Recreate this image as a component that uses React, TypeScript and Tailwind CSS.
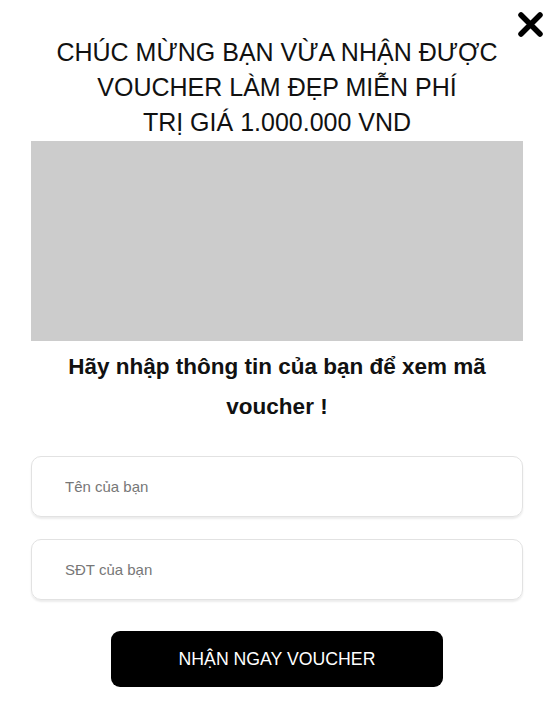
export default function App() {
  return (
    <div className="relative min-h-[705px] w-[554px] bg-white font-['Liberation_Sans',Arial,sans-serif] text-black">
      <button className="absolute right-[10px] top-[11px] h-[27px] w-[27px]" aria-label="Đóng">
        <svg viewBox="0 0 27 27" className="h-full w-full">
          <path d="M4 4 L23 23 M23 4 L4 23" stroke="#000" strokeWidth="5.5" strokeLinecap="round" />
        </svg>
      </button>

      <div className="px-[31px] pt-[35px]">
        <h1 className="text-center text-[25px] leading-[35px] font-normal text-[#111]">
          CHÚC MỪNG BẠN VỪA NHẬN ĐƯỢC
          <br />
          VOUCHER LÀM ĐẸP MIỄN PHÍ
          <br />
          TRỊ GIÁ 1.000.000 VND
        </h1>

        <div className="mt-[1px] h-[200px] w-full bg-[#cccccc]" />

        <p className="mx-auto mt-[6px] max-w-[450px] text-center text-[22.5px] leading-[40px] font-bold text-[#111]">
          Hãy nhập thông tin của bạn để xem mã voucher !
        </p>

        <div className="mt-[29px] flex flex-col gap-[22px]">
          <input
            placeholder="Tên của bạn"
            className="h-[61px] w-full rounded-[10px] border border-[#e2e2e2] px-[33px] text-[15px] shadow-[0_2px_2px_rgba(0,0,0,0.08)] outline-none placeholder:text-[#777]"
          />
          <input
            placeholder="SĐT của bạn"
            className="h-[61px] w-full rounded-[10px] border border-[#e2e2e2] px-[33px] text-[15px] shadow-[0_2px_2px_rgba(0,0,0,0.08)] outline-none placeholder:text-[#777]"
          />
        </div>

        <div className="mt-[31px] flex justify-center">
          <button className="h-[56px] w-[332px] rounded-[9px] bg-black text-[17.7px] text-white">
            NHẬN NGAY VOUCHER
          </button>
        </div>
      </div>
    </div>
  );
}
